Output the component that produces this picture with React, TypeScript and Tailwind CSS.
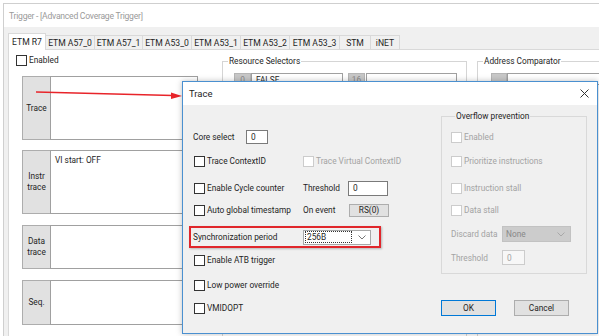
import clsx from "clsx";

const tabs = [
  { label: "ETM R7", w: "w-[38px]", active: true },
  { label: "ETM A57_0", w: "w-[50px]" },
  { label: "ETM A57_1", w: "w-[49px]" },
  { label: "ETM A53_0", w: "w-[50px]" },
  { label: "ETM A53_1", w: "w-[50px]" },
  { label: "ETM A53_2", w: "w-[50px]" },
  { label: "ETM A53_3", w: "w-[51px]" },
  { label: "STM", w: "w-[32px]" },
  { label: "iNET", w: "w-[30px]" },
];

const traceRows = [
  { label: ["Trace"], h: "h-[64px]", mt: "mt-[10px]" },
  { label: ["Instr", "trace"], h: "h-[64px]", mt: "mt-[10px]", text: "VI start: OFF" },
  { label: ["Data", "trace"], h: "h-[44px]", mt: "mt-[11px]" },
  { label: ["Seq."], h: "h-[45px]", mt: "mt-[11px]" },
  { label: [""], h: "h-[30px]", mt: "mt-[11px]" },
];

function Box({ disabled }: { disabled?: boolean }) {
  return (
    <span
      className={clsx(
        "inline-block w-[11px] h-[11px] border bg-white shrink-0",
        disabled ? "border-[#cccccc]" : "border-[#333333]"
      )}
    />
  );
}

function Check({ label, disabled }: { label: string; disabled?: boolean }) {
  return (
    <div className="flex items-center gap-[2px]">
      <Box disabled={disabled} />
      <span className={clsx(disabled && "text-[#a3a3a3]")}>{label}</span>
    </div>
  );
}

function Chevron({ color }: { color: string }) {
  return (
    <svg width="8" height="5" viewBox="0 0 8 5" fill="none">
      <path d="M0.5 0.5 L4 4 L7.5 0.5" stroke={color} strokeWidth="1" />
    </svg>
  );
}

export default function App() {
  return (
    <div className="relative w-[599px] h-[336px] overflow-hidden bg-white font-['Roboto',sans-serif] text-[8.3px] leading-[12px] text-[#1e1e1e]">
      <div className="ml-[3px] mt-[3px] h-[333px] border-l border-t border-[#cfcfcf] flex flex-col">
        <div className="h-[23px] shrink-0 bg-white flex items-center pl-[5px] text-[8.6px] tracking-[-0.25px] text-[#9a9a9a]">
          Trigger - [Advanced Coverage Trigger]
        </div>
        <div className="flex-1 bg-[#f0f0f0] pl-[4px] pt-[6px] flex flex-col">
          {/* tabs */}
          <div className="flex items-end h-[16px] shrink-0">
            {tabs.map((t) => (
              <div
                key={t.label}
                className={clsx(
                  "flex items-center justify-center border-l border-t border-r border-[#d9d9d9] -mr-px text-[8.6px]",
                  t.w,
                  t.active ? "h-[17px] bg-white -mb-px relative z-10 border-b-0" : "h-[14px] bg-[#f0f0f0]"
                )}
              >
                {t.label}
              </div>
            ))}
          </div>

          {/* tab panel */}
          <div className="flex-1 bg-white border-l border-t border-[#d9d9d9] flex">
            <div className="w-[213px] shrink-0 pl-[7px] pt-[4px]">
              <Check label="Enabled" />
              <div className="ml-[6px]">
                {traceRows.map((r, i) => (
                  <div key={i} className={clsx("flex", r.h, r.mt)}>
                    <div className="w-[29px] shrink-0 bg-[#e1e1e1] border border-[#adadad] flex flex-col items-center justify-center leading-[11px]">
                      {r.label.map((l) => (
                        <span key={l}>{l}</span>
                      ))}
                    </div>
                    <div className="w-[148px] border border-[#a0a0a0] -ml-px pl-[4px] pt-[3px]">
                      {r.text}
                    </div>
                  </div>
                ))}
              </div>
            </div>

            <fieldset className="w-[245px] h-[290px] shrink-0 mt-[5px] border border-[#d5d5d5]">
              <legend className="ml-[5px] px-[1px]">Resource Selectors</legend>
              <div className="flex mt-[6px] ml-[11px] h-[12px]">
                <div className="w-[17px] bg-[#c8c8c8] border border-[#b5b5b5] text-center text-[#888]">0</div>
                <div className="w-[92px] border border-[#a0a0a0] pl-[4px]">FALSE</div>
                <div className="w-[17px] ml-[5px] bg-[#c8c8c8] border border-[#b5b5b5] text-center text-[#888]">16</div>
                <div className="w-[91px] ml-[1px] border border-[#a0a0a0]" />
              </div>
            </fieldset>

            <fieldset className="w-[150px] h-[290px] shrink-0 ml-[10px] mt-[5px] border border-[#d5d5d5]">
              <legend className="ml-[5px] px-[1px]">Address Comparator</legend>
              <div className="flex mt-[6px] ml-[13px] h-[12px]">
                <div className="w-[16px] bg-[#c8c8c8] border border-[#b5b5b5]" />
                <div className="flex-1 border border-[#a0a0a0]" />
              </div>
            </fieldset>
          </div>
        </div>
      </div>

      {/* red arrow */}
      <svg className="absolute left-0 top-0 z-20" width="599" height="336" viewBox="0 0 599 336">
        <line x1="36" y1="92" x2="173" y2="95.5" stroke="#e8242a" strokeWidth="1.6" />
        <polygon points="182,96 171,92.5 171,99" fill="#e8242a" />
      </svg>

      {/* Trace dialog */}
      <div className="absolute left-[182px] top-[81px] w-[416px] h-[253px] border border-[#4a90d0] bg-[#f0f0f0] shadow-[0_0_6px_rgba(0,0,0,0.25)] z-30 flex flex-col">
        <div className="h-[23px] shrink-0 bg-white flex items-center justify-between pl-[6px] pr-[8px] text-[9.5px]">
          <span>Trace</span>
          <svg width="9" height="9" viewBox="0 0 9 9">
            <path d="M0.5 0.5 L8.5 8.5 M8.5 0.5 L0.5 8.5" stroke="#333" strokeWidth="1" />
          </svg>
        </div>
        <div className="flex flex-1">
          {/* left column */}
          <div className="w-[258px] shrink-0 pl-[6px]">
            <div className="flex items-center h-[14px] mt-[25px] pl-[4px]">
              <span className="w-[53px]">Core select</span>
              <div className="w-[22px] h-[14px] bg-white border border-[#7a7a7a] pl-[4px] flex items-center">0</div>
            </div>
            <div className="flex items-center h-[14px] mt-[10px] pl-[5px]">
              <div className="w-[109px]">
                <Check label="Trace ContextID" />
              </div>
              <Check label="Trace Virtual ContextID" disabled />
            </div>
            <div className="flex items-center h-[14px] mt-[13px] pl-[5px]">
              <div className="w-[109px]">
                <Check label="Enable Cycle counter" />
              </div>
              <span className="w-[45px]">Threshold</span>
              <div className="w-[40px] h-[15px] bg-white border border-[#7a7a7a] pl-[4px] flex items-center">0</div>
            </div>
            <div className="flex items-center h-[14px] mt-[8px] pl-[5px]">
              <div className="w-[109px]">
                <Check label="Auto global timestamp" />
              </div>
              <span className="w-[46px]">On event</span>
              <div className="w-[40px] h-[13px] bg-[#e1e1e1] border border-[#adadad] flex items-center justify-center">RS(0)</div>
            </div>
            <div className="flex items-center w-[192px] h-[22px] mt-[9px] border-2 border-[#e0262b] pl-[2px] shadow-[1px_1px_2px_rgba(0,0,0,0.25)]">
              <span className="w-[110px]">Synchronization period</span>
              <div className="w-[68px] h-[15px] bg-white border border-[#a8a8a8] flex items-center pl-[1px] pr-[4px]">
                <span className="flex-1 h-[12px] border border-dotted border-[#333] pl-[1px] leading-[10px]">256B</span>
                <span className="ml-[6px]">
                  <Chevron color="#777" />
                </span>
              </div>
            </div>
            <div className="flex items-center h-[14px] mt-[5px] pl-[5px]">
              <Check label="Enable ATB trigger" />
            </div>
            <div className="flex items-center h-[14px] mt-[11px] pl-[5px]">
              <Check label="Low power override" />
            </div>
            <div className="flex items-center h-[14px] mt-[9px] pl-[5px]">
              <Check label="VMIDOPT" />
            </div>
          </div>

          {/* right column */}
          <div className="w-[146px] shrink-0">
            <fieldset className="mt-[5px] border border-[#d9d9d9] pl-[9px] pb-[8px] text-[#a3a3a3]">
              <legend className="ml-[4px] px-[1px] text-[#1e1e1e] leading-[12px]">Overflow prevention</legend>
              <div className="flex items-center h-[14px] mt-[8px]">
                <Check label="Enabled" disabled />
              </div>
              <div className="flex items-center h-[14px] mt-[10px]">
                <Check label="Prioritize instructions" disabled />
              </div>
              <div className="flex items-center h-[14px] mt-[13px]">
                <Check label="Instruction stall" disabled />
              </div>
              <div className="flex items-center h-[14px] mt-[8px]">
                <Check label="Data stall" disabled />
              </div>
              <div className="flex items-center h-[16px] mt-[9px]">
                <span className="w-[51px]">Discard data</span>
                <div className="w-[69px] h-[16px] bg-[#cccccc] border border-[#c2c2c2] flex items-center pl-[3px] pr-[5px] text-[#888]">
                  <span className="flex-1">None</span>
                  <Chevron color="#a8a8a8" />
                </div>
              </div>
              <div className="flex items-center h-[15px] mt-[8px]">
                <span className="w-[51px]">Threshold</span>
                <div className="w-[23px] h-[15px] bg-[#f7f7f7] border border-[#cccccc] pl-[4px] flex items-center">0</div>
              </div>
            </fieldset>
            <div className="flex mt-[26px] gap-[18px]">
              <div className="w-[55px] h-[16px] bg-[#e1e1e1] border border-[#0078d7] flex items-center justify-center">OK</div>
              <div className="w-[55px] h-[16px] bg-[#e1e1e1] border border-[#adadad] flex items-center justify-center">Cancel</div>
            </div>
          </div>
        </div>
      </div>
    </div>
  );
}
